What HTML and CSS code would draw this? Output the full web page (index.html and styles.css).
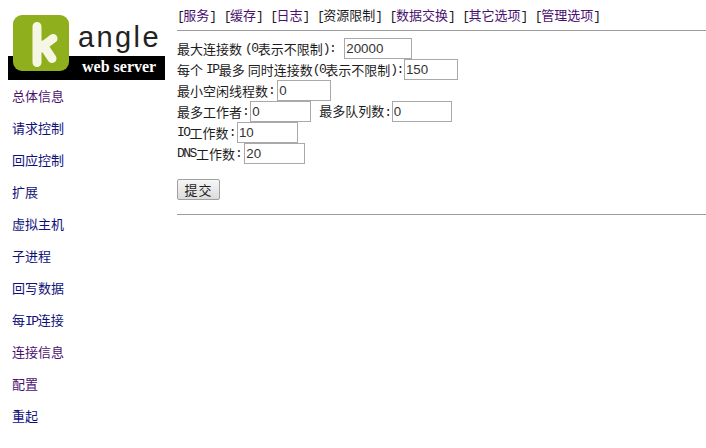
FILE: index.html
```html
<!DOCTYPE html>
<html lang="zh-CN">
<head>
<meta charset="utf-8">
<title>kangle web server</title>
<link rel="stylesheet" href="styles.css">
</head>
<body>
<div class="page">
  <aside class="side">
    <svg class="logo" width="157" height="66" viewBox="0 0 157 66">
      <text x="70" y="32" class="logo-angle">angle</text>
      <rect x="0" y="41" width="157" height="24" fill="#000"/>
      <rect x="5" y="0" width="56" height="56" rx="9" fill="#8fb01c"/>
      <path d="M29 11.5 L29 47.5 M31 34 L45 23.5 M35 30 L44 43.5" fill="none" stroke="#f5f7e4" stroke-width="9" stroke-linecap="round" stroke-linejoin="round"/>
      <text x="74" y="57" class="logo-web">web server</text>
    </svg>
    <nav class="menu">
      <a class="v" href="#">总体信息</a>
      <a class="u" href="#">请求控制</a>
      <a class="u" href="#">回应控制</a>
      <a class="u" href="#">扩展</a>
      <a class="u" href="#">虚拟主机</a>
      <a class="u" href="#">子进程</a>
      <a class="u" href="#">回写数据</a>
      <a class="u" href="#">每<span class="l">IP</span>连接</a>
      <a class="v" href="#">连接信息</a>
      <a class="v" href="#">配置</a>
      <a class="u" href="#">重起</a>
    </nav>
  </aside>
  <main class="main">
    <div class="tabs">
      <span><span class="l">[</span><a class="v" href="#">服务</a><span class="l">]</span></span>
      <span><span class="l">[</span><a class="v" href="#">缓存</a><span class="l">]</span></span>
      <span><span class="l">[</span><a class="v" href="#">日志</a><span class="l">]</span></span>
      <span><span class="l">[</span>资源限制<span class="l">]</span></span>
      <span><span class="l">[</span><a class="v" href="#">数据交换</a><span class="l">]</span></span>
      <span><span class="l">[</span><a class="v" href="#">其它选项</a><span class="l">]</span></span>
      <span><span class="l">[</span><a class="v" href="#">管理选项</a><span class="l">]</span></span>
    </div>
    <hr class="rule rule-top">
    <form class="form">
      <div class="row">最大连接数<span class="l sp">(0</span>表示不限制<span class="l">):</span><input class="f68 m9" value="20000"></div>
      <div class="row">每个<span class="l sp">IP</span>最多<span class="sp">同时连接数</span><span class="l">(0</span>表示不限制<span class="l">):</span><input class="f54 m1" value="150"></div>
      <div class="row">最小空闲线程数<span class="l">:</span><input class="f54 m3" value="0"></div>
      <div class="row">最多工作者<span class="l">:</span><input class="f61" value="0"><span class="second">最多队列数<span class="l">:</span></span><input class="f60 m1" value="0"></div>
      <div class="row"><span class="l">IO</span>工作数<span class="l">:</span><input class="f61" value="10"></div>
      <div class="row"><span class="l">DNS</span>工作数<span class="l">:</span><input class="f61 m3" value="20"></div>
      <button class="submit" type="button">提交</button>
    </form>
    <hr class="rule rule-bottom">
  </main>
</div>
</body>
</html>
```
FILE: styles.css
```css
html, body {
  margin: 0;
  padding: 0;
  background: #fff;
}
body {
  font-family: "Noto Sans CJK SC", sans-serif;
  font-size: 13px;
  color: #1c1c1c;
  width: 706px;
  height: 448px;
  overflow: hidden;
}
a { text-decoration: none; }
a.v { color: #4a1070; }
a.u { color: #10107a; }
.l { font-family: "Liberation Mono", monospace; font-size: 13px; letter-spacing: -1.5px; }
.sp { margin-left: 3px; }
.page { display: flex; }
.side {
  width: 177px;
  flex: none;
  padding: 15px 0 0 8px;
  box-sizing: border-box;
}
.logo { display: block; }
.logo-angle {
  font-family: "Liberation Sans", sans-serif;
  font-size: 29px;
  letter-spacing: 2.4px;
  fill: #222;
}
.logo-web {
  font-family: "Liberation Serif", serif;
  font-size: 16px;
  font-weight: bold;
  fill: #fff;
}
.menu {
  display: flex;
  flex-direction: column;
  row-gap: 12px;
  margin-top: 5px;
  padding-left: 4px;
}
.menu a { display: block; height: 20px; line-height: 20px; }
.main { flex: 1; min-width: 0; }
.tabs {
  display: flex;
  gap: 8px;
  height: 20px;
  padding-top: 5px;
  line-height: 20px;
}
.rule {
  border: 0;
  height: 1px;
  margin: 0;
  background: #9c9c9c;
}
.rule-top { margin-top: 5px; }
.form { margin-top: 7px; }
.row { height: 21px; line-height: 21px; display: flex; align-items: center; white-space: pre; }
.row input {
  box-sizing: border-box;
  height: 21px;
  margin: 0 0 0 2px;
  padding: 1px;
  border: 1px solid #a9a9a9;
  font-family: "Liberation Sans", sans-serif;
  font-size: 13.33px;
  color: #333;
  background: #fff;
}
.row input.m1 { margin-left: 1px; }
.row input.m3 { margin-left: 3px; }
.row input.m9 { margin-left: 9px; }
.f68 { width: 68px; }
.f54 { width: 54px; }
.f61 { width: 61px; }
.f60 { width: 60px; }
.second { margin-left: 8px; }
.submit {
  display: block;
  box-sizing: border-box;
  width: 43px;
  height: 21px;
  margin: 15px 0 0;
  padding: 0;
  border: 1px solid #a0a0a0;
  border-radius: 2px;
  background: linear-gradient(#f6f6f6, #dcdcdc);
  font-family: "Noto Sans CJK SC", sans-serif;
  font-size: 13px;
  letter-spacing: 1px;
  color: #1c1c1c;
}
.rule-bottom { margin-top: 14px; }
```
